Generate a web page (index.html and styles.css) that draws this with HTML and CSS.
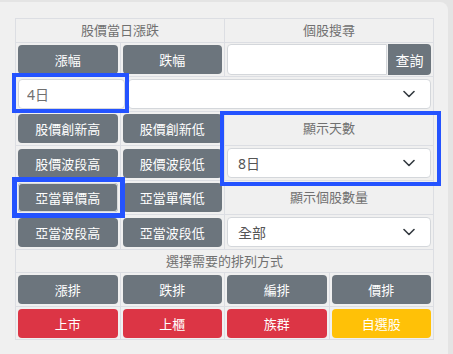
FILE: index.html
```html
<!DOCTYPE html>
<html lang="zh-Hant">
  <head>
    <meta charset="UTF-8" />
    <meta name="viewport" content="width=device-width, initial-scale=1.0" />
    <title>股價篩選</title>
    <link rel="stylesheet" href="styles.css">
  </head>
  <body>
    <div class="panel">
      <div class="board">
        <table class="grid">
          <colgroup>
            <col /><col /><col /><col />
          </colgroup>
          <tr>
            <th colspan="2">股價當日漲跌</th>
            <th colspan="2">個股搜尋</th>
          </tr>
          <tr>
            <td><button class="btn">漲幅</button></td>
            <td><button class="btn">跌幅</button></td>
            <td colspan="2" class="search-cell">
              <div class="search">
                <input class="field search-input" type="text" />
                <button class="btn search-btn">查詢</button>
              </div>
            </td>
          </tr>
          <tr>
            <td colspan="4">
              <div class="range">
                <input class="field day-input" type="text" value="4日" readonly />
                <div class="select">
                  <span></span>
                  <svg width="12" height="12" viewBox="0 0 12 12"><path d="M1 3.5L6 8.5L11 3.5" fill="none" stroke="#343a40" stroke-width="1.6" stroke-linecap="round" stroke-linejoin="round"/></svg>
                </div>
              </div>
            </td>
          </tr>
          <tr>
            <td><button class="btn">股價創新高</button></td>
            <td><button class="btn">股價創新低</button></td>
            <th colspan="2">顯示天數</th>
          </tr>
          <tr>
            <td><button class="btn">股價波段高</button></td>
            <td><button class="btn">股價波段低</button></td>
            <td colspan="2" class="select-cell">
              <div class="select">
                <span>8日</span>
                <svg width="12" height="12" viewBox="0 0 12 12"><path d="M1 3.5L6 8.5L11 3.5" fill="none" stroke="#343a40" stroke-width="1.6" stroke-linecap="round" stroke-linejoin="round"/></svg>
              </div>
            </td>
          </tr>
          <tr>
            <td><button class="btn active">亞當單價高</button></td>
            <td><button class="btn">亞當單價低</button></td>
            <th colspan="2">顯示個股數量</th>
          </tr>
          <tr>
            <td><button class="btn">亞當波段高</button></td>
            <td><button class="btn">亞當波段低</button></td>
            <td colspan="2" class="select-cell">
              <div class="select">
                <span>全部</span>
                <svg width="12" height="12" viewBox="0 0 12 12"><path d="M1 3.5L6 8.5L11 3.5" fill="none" stroke="#343a40" stroke-width="1.6" stroke-linecap="round" stroke-linejoin="round"/></svg>
              </div>
            </td>
          </tr>
          <tr>
            <th colspan="4" class="sort-title">選擇需要的排列方式</th>
          </tr>
          <tr>
            <td><button class="btn">漲排</button></td>
            <td><button class="btn">跌排</button></td>
            <td><button class="btn">編排</button></td>
            <td><button class="btn">價排</button></td>
          </tr>
          <tr class="last-row">
            <td><button class="btn btn-red">上市</button></td>
            <td><button class="btn btn-red">上櫃</button></td>
            <td><button class="btn btn-red">族群</button></td>
            <td><button class="btn btn-yellow">自選股</button></td>
          </tr>
        </table>

        <!-- highlight boxes -->
        <div class="mark mark-days-input"></div>
        <div class="mark mark-days-select"></div>
        <div class="mark mark-adam"></div>
      </div>
    </div>
  </body>
</html>
```

FILE: styles.css
```css
* {
  margin: 0;
  padding: 0;
  box-sizing: border-box;
}

body {
  font-family: "Noto Sans", "Noto Sans CJK TC", sans-serif;
  background-color: #e4e4e4;
  overflow: hidden;
}

.panel {
  margin: 2px 5px 0 0;
  height: 360px;
  background-color: #f0f0f0;
  border-top-right-radius: 8px;
  padding: 16px 14px 0 15px;
}

.board {
  position: relative;
}

.grid {
  width: 100%;
  border-collapse: collapse;
  table-layout: fixed;
}

.grid col {
  width: 25%;
}

.grid th,
.grid td {
  border: 1px solid #dcdee3;
  padding: 2px;
  vertical-align: middle;
}

.grid th {
  font-weight: 400;
  font-size: 13px;
  color: #707070;
  padding: 1px 0;
  line-height: 21px;
  text-align: center;
}

.grid .sort-title {
  padding: 0;
  line-height: 22px;
}

.last-row td {
  padding-bottom: 1px;
}

.btn {
  display: block;
  width: 100%;
  height: 29px;
  border: 0;
  border-radius: 4px;
  background-color: #6c757d;
  color: #fff;
  font-family: inherit;
  font-size: 13px;
  cursor: pointer;
}

.btn.active {
  box-shadow: inset 0 0 0 1px #d8dadc;
}

.btn-red {
  background-color: #dc3545;
}

.btn-yellow {
  background-color: #ffc107;
}

.field {
  height: 30px;
  border: 1px solid #d4d7db;
  border-radius: 4px;
  background-color: #fff;
  font-family: inherit;
  font-size: 14px;
  color: #707070;
  outline: none;
}

.search-cell,
.select-cell {
  padding-left: 1px;
  padding-right: 1px;
}

.grid .search-cell {
  padding-top: 1px;
  padding-bottom: 1px;
}

.search {
  display: flex;
  gap: 1px;
}

.search-input {
  flex: 1;
  height: 31px;
  min-width: 0;
  border-radius: 4px 0 0 4px;
}

.search-btn {
  width: 43px;
  height: 31px;
  font-size: 14px;
  border-radius: 0 4px 4px 0;
}

.range {
  display: flex;
  gap: 3px;
}

.day-input {
  width: 107px;
  padding: 0 8px;
}

.select {
  flex: 1;
  height: 30px;
  display: flex;
  align-items: center;
  justify-content: space-between;
  padding: 0 15px 0 10px;
  background-color: #fff;
  border: 1px solid #d4d7db;
  border-radius: 4px;
  font-size: 14px;
  color: #555;
}

.mark {
  position: absolute;
  border: 4px solid #2453ff;
  pointer-events: none;
}

.mark-days-input {
  left: -3px;
  top: 55px;
  width: 117px;
  height: 40px;
}

.mark-days-select {
  left: 205px;
  top: 93px;
  width: 221px;
  height: 75px;
}

.mark-adam {
  left: -3px;
  top: 159px;
  width: 113px;
  height: 41px;
  border-width: 5px;
}
```
